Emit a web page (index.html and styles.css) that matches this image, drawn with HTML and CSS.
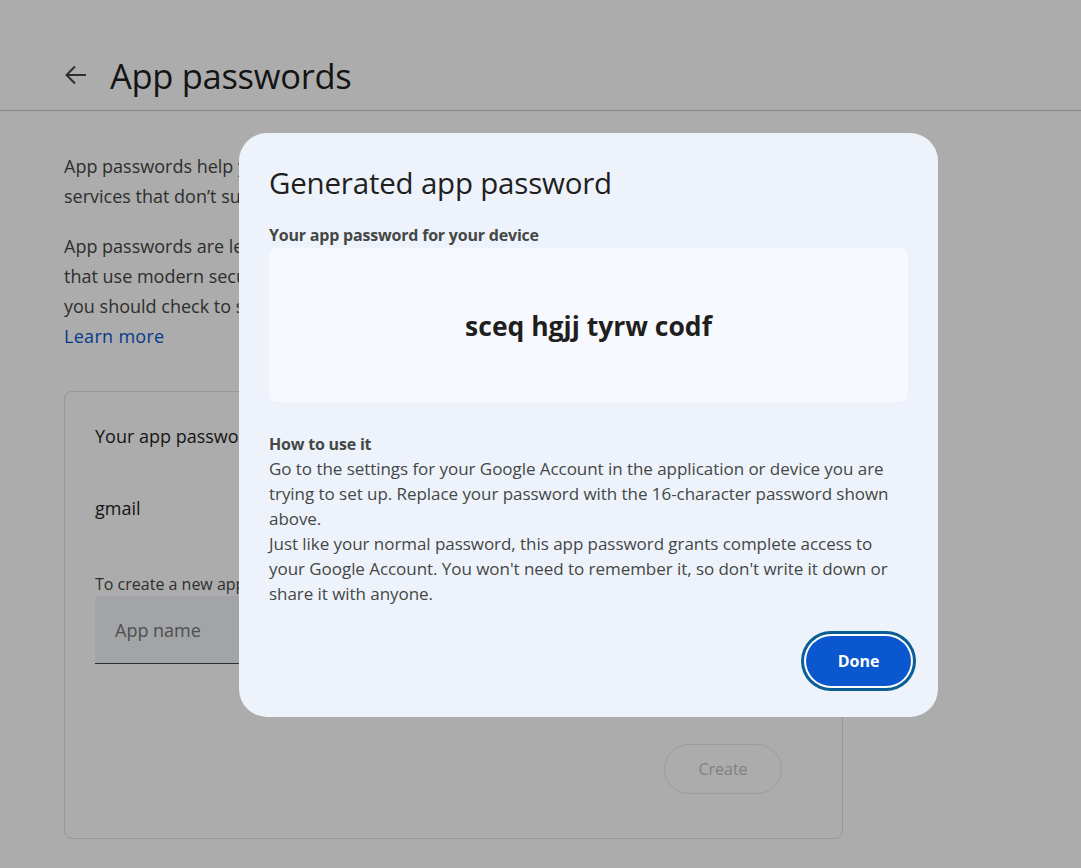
FILE: index.html
```html
<!DOCTYPE html>
<html lang="en">
<head>
<meta charset="utf-8">
<title>App passwords</title>
<link rel="stylesheet" href="styles.css">
</head>
<body>
<div class="page">
  <header class="topbar">
    <span class="back">
      <svg width="24" height="24" viewBox="0 0 24 24"><path d="M23 12H3.5M12 3.5L3.5 12l8.5 8.5" fill="none" stroke="#444746" stroke-width="2"/></svg>
    </span>
    <h1 class="title">App passwords</h1>
  </header>
  <main class="content">
    <p class="para">App passwords help you sign in to your Google Account from older apps and<br>services that don’t support modern security standards.</p>
    <p class="para">App passwords are less secure than using up-to-date apps and services<br>that use modern security standards. Before you create an app password,<br>you should check to see if your app needs this in order to sign in.<br><a class="link" href="#">Learn more</a></p>
    <section class="card">
      <div class="card-title">Your app passwords</div>
      <div class="app-item">gmail</div>
      <div class="hint">To create a new app specific password, type a name for it below...</div>
      <div class="field"><span class="placeholder">App name</span></div>
      <div class="actions"><button class="create">Create</button></div>
    </section>
  </main>
</div>
<div class="scrim"></div>
<div class="dialog">
  <h2 class="dlg-title">Generated app password</h2>
  <div class="label">Your app password for your device</div>
  <div class="pwbox"><span class="pw">sceq hgjj tyrw codf</span></div>
  <div class="howto">
    <div class="howto-title">How to use it</div>
    <div class="howto-text">Go to the settings for your Google Account in the application or device you are trying to set up. Replace your password with the 16-character password shown above.<br>Just like your normal password, this app password grants complete access to your Google Account. You won't need to remember it, so don't write it down or share it with anyone.</div>
  </div>
  <div class="dlg-actions"><button class="done">Done</button></div>
</div>
</body>
</html>
```

FILE: styles.css
```css
* { box-sizing: border-box; }
html, body { margin: 0; padding: 0; }
body {
  width: 1081px;
  height: 868px;
  overflow: hidden;
  background: #ffffff;
  font-family: "Open Sans", Roboto, Arial, sans-serif;
  color: #1f1f1f;
  position: relative;
}
.page { width: 1081px; }
.topbar {
  height: 111px;
  border-bottom: 1px solid #c4c7c5;
  display: flex;
  align-items: center;
  padding-left: 63px;
  padding-top: 40px;
}
.back { width: 24px; height: 24px; display: flex; }
.title {
  margin: 0 0 0 23px;
  font-weight: 400;
  font-size: 34.5px;
  letter-spacing: -0.3px;
  color: #1f1f1f;
}
.content { padding: 40px 0 0 64px; width: 843px; }
.para {
  margin: 0 0 20px 0;
  font-size: 18px;
  line-height: 30px;
  color: #444746;
  white-space: nowrap;
}
.link { color: #0b57d0; text-decoration: none; letter-spacing: 0.3px; }
.card {
  margin-top: 40px;
  width: 779px;
  height: 448px;
  border: 1px solid #e0e2e6;
  border-radius: 8px;
  padding: 32px 30px 0 30px;
}
.card-title { font-size: 18px; line-height: 24px; color: #1f1f1f; }
.app-item { margin-top: 48px; font-size: 18px; line-height: 24px; color: #1f1f1f; }
.hint { margin-top: 54px; font-size: 16px; line-height: 20px; color: #444746; }
.field {
  margin-top: 2px;
  width: 620px;
  height: 68px;
  background: #f0f4f9;
  border-bottom: 1px solid #444746;
  display: flex;
  align-items: center;
  padding-left: 20px;
  border-radius: 4px 4px 0 0;
}
.placeholder { font-size: 18px; color: #747775; }
.actions { display: flex; justify-content: flex-end; margin-top: 80px; padding-right: 30px; }
.create {
  width: 118px;
  height: 50px;
  border-radius: 25px;
  border: 1px solid #e6e7e9;
  background: transparent;
  font-family: "Open Sans", Roboto, sans-serif;
  font-size: 16px;
  color: #c0c0c0;
  padding: 0;
}
.scrim {
  position: absolute;
  inset: 0;
  background: rgba(0, 0, 0, 0.325);
}
.dialog {
  position: absolute;
  left: 239px;
  top: 133px;
  width: 699px;
  height: 584px;
  background: #eef3fb;
  border-radius: 28px;
  padding: 32px 30px 0 30px;
  display: flex;
  flex-direction: column;
}
.dlg-title {
  margin: 0;
  font-weight: 400;
  font-size: 29.5px;
  line-height: 36px;
  color: #1f1f1f;
  letter-spacing: -0.2px;
}
.label {
  margin-top: 24px;
  font-size: 16px;
  font-weight: 700;
  line-height: 20px;
  color: #444746;
  letter-spacing: -0.2px;
}
.pwbox {
  margin-top: 3px;
  height: 154px;
  width: 639px;
  background: #f7f9fe;
  border-radius: 8px;
  display: flex;
  align-items: center;
  justify-content: center;
}
.pw {
  font-weight: 700;
  font-size: 26.5px;
  color: #1f1f1f;
  margin-top: 2px;
}
.howto { margin-top: 30px; font-size: 16px; line-height: 25px; color: #444746; }
.howto-title { font-weight: 700; line-height: 24px; letter-spacing: -0.2px; }
.howto-text { width: 640px; font-size: 17px; letter-spacing: -0.05px; }
.dlg-actions {
  display: flex;
  justify-content: flex-end;
  margin-top: 30px;
  margin-right: -3px;
}
.done {
  width: 105px;
  height: 50px;
  border-radius: 25px;
  border: none;
  background: #0b57d0;
  color: #ffffff;
  font-family: "Open Sans", Roboto, sans-serif;
  font-weight: 700;
  font-size: 16px;
  box-shadow: 0 0 0 2px #ffffff, 0 0 0 5px #0a5e96;
}
```
